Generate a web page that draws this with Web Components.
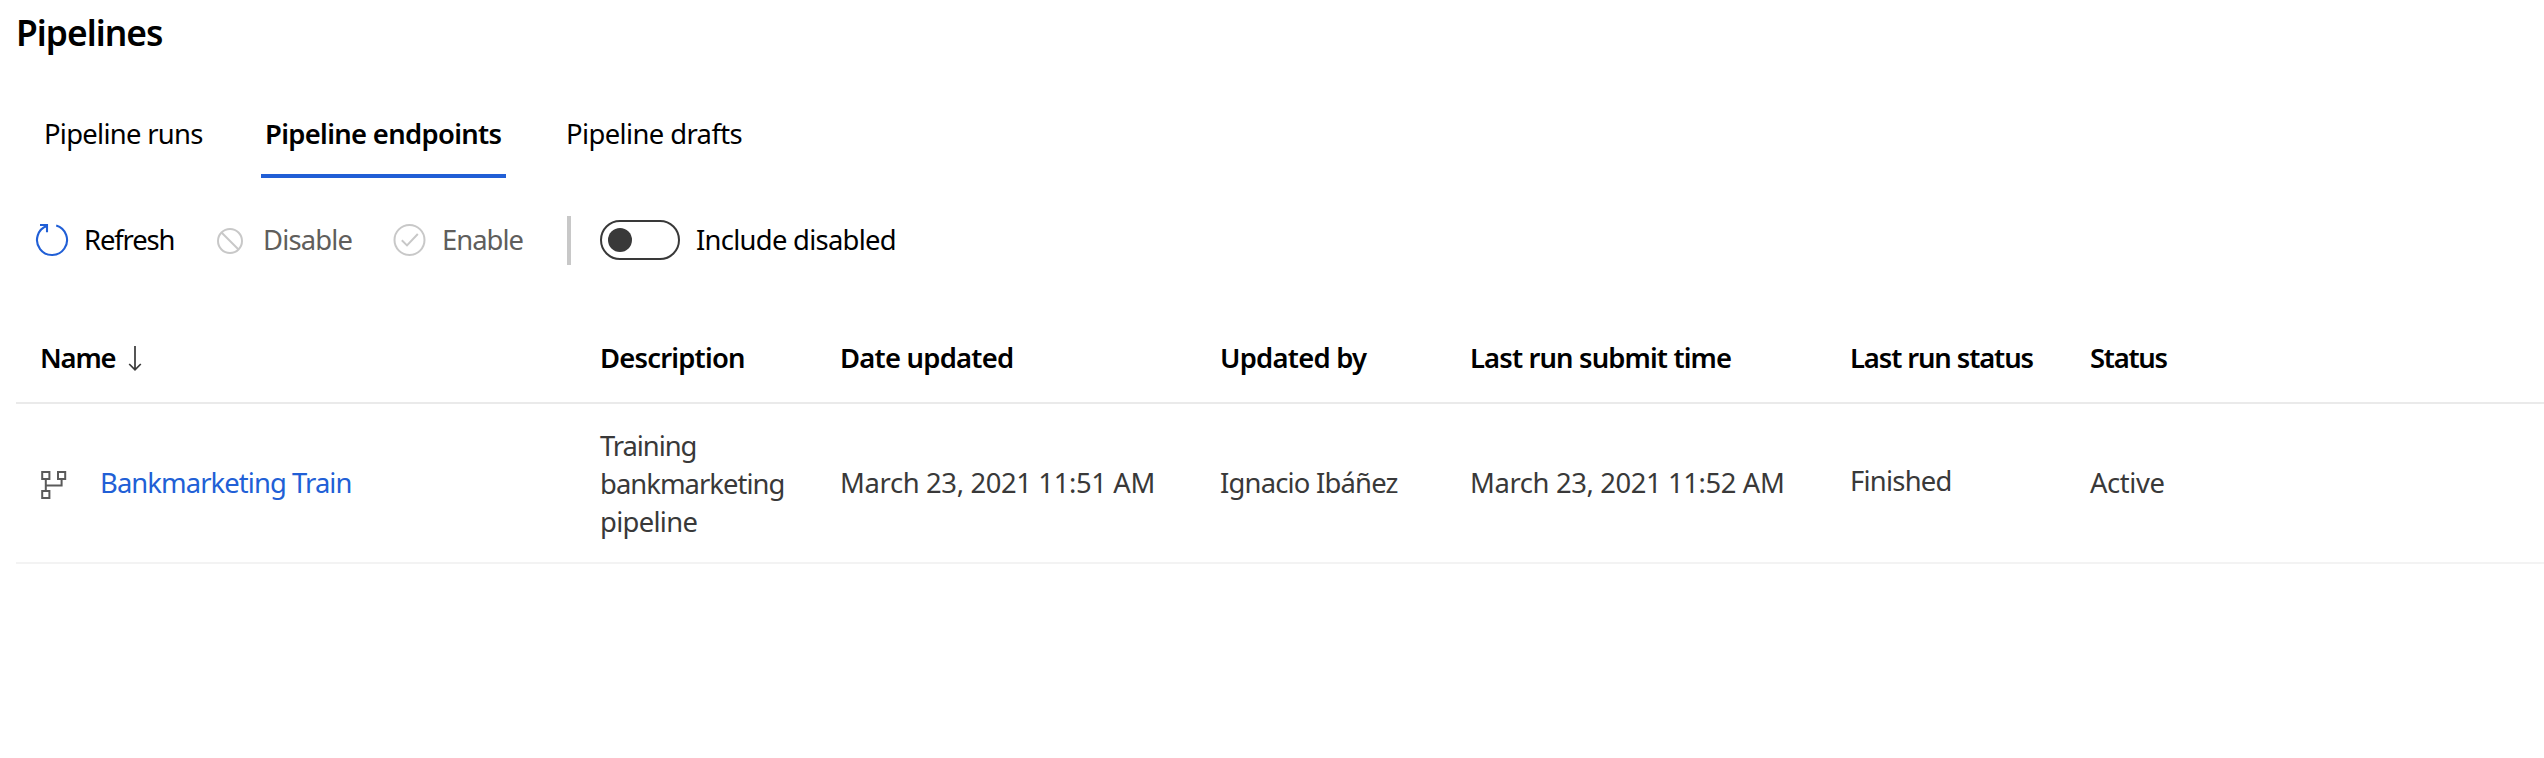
<!DOCTYPE html>
<html lang="en">
<head>
<meta charset="utf-8">
<title>Pipelines</title>
<style>
body{margin:0;background:#fff;color:#000;font:27.4px/38px "Noto Sans","Open Sans",sans-serif}
</style>
</head>
<body>
<pipelines-page></pipelines-page>
<script>
const define=(name,html,setup)=>customElements.define(name,class extends HTMLElement{
  connectedCallback(){
    if(this.shadowRoot)return;
    const t=document.createElement('template');
    t.innerHTML=html;
    this.attachShadow({mode:'open'}).append(t.content.cloneNode(true));
    if(setup)setup(this);
  }
});

// A label whose tracking is adjusted so its glyphs span the width given in "w".
const ctx=document.createElement('canvas').getContext('2d');
define('fit-text',`<style>:host{display:inline-block;white-space:nowrap;margin-left:1px}</style><slot></slot>`,el=>{
  const cs=getComputedStyle(el),s=el.textContent;
  ctx.font=`${cs.fontWeight} ${cs.fontSize} ${cs.fontFamily}`;
  const m=ctx.measureText(s),ink=m.actualBoundingBoxRight+m.actualBoundingBoxLeft;
  el.style.letterSpacing=((el.getAttribute('w')-ink)/(s.length-1)).toFixed(3)+'px';
});

define('page-title',`<style>:host{display:block;padding:8px 0 0 15px;font-size:35.4px;line-height:48px;font-weight:600}</style><slot></slot>`);

define('tab-item',`<style>
:host{display:block;box-sizing:border-box;height:88px;padding:25px 0 0 var(--inset,2px);border-bottom:4px solid transparent}
:host([selected]){border-color:#215fd6;font-weight:600}
</style><slot></slot>`);

define('tab-bar',`<style>:host{display:flex;margin-top:34px;padding-left:41px}
.runs{width:220px}
.endpoints{width:245px;margin-right:56px}
</style>
<tab-item class="runs"><fit-text w="156.3">Pipeline runs</fit-text></tab-item>
<tab-item class="endpoints" selected style="--inset:3px"><fit-text w="234.5">Pipeline endpoints</fit-text></tab-item>
<tab-item style="--inset:3px"><fit-text w="173.5">Pipeline drafts</fit-text></tab-item>`);

define('command-button',`<style>
:host{display:flex;align-items:center}
:host([disabled]){color:#605e5c}
::slotted(svg){display:block;flex:none;fill:none;stroke-width:2}
</style><slot name="icon"></slot><slot></slot>`);

define('toggle-switch',`<style>
:host{display:flex;align-items:center}
.track{box-sizing:border-box;width:80px;height:40px;border:2px solid #393939;border-radius:20px;padding:6px;margin-right:15px}
.knob{width:24px;height:24px;border-radius:50%;background:#393939}
</style><div class="track"><div class="knob"></div></div><slot></slot>`);

define('command-bar',`<style>
:host{display:flex;align-items:center;height:124px;padding-left:34px}
.rule{width:4px;height:49px;background:#c8c8c8;margin-right:29px}
.refresh{width:179px}.disable{width:176px}.enable{width:178px}
.refresh svg{margin-right:13px}.disable svg{margin-right:19px}.enable svg{margin-right:14px}
</style>
<command-button class="refresh"><svg slot="icon" width="36" height="36" stroke="#215fd6"><path d="M22.2 3.6A15 15 0 1 1 13.2 3.8M6 3H13V10.2" stroke-width="2.1"/></svg><fit-text w="87.5">Refresh</fit-text></command-button>
<command-button class="disable" disabled><svg slot="icon" width="30" height="30" stroke="#c8c8c8"><circle cx="17" cy="16" r="12"/><path d="M8.5 7.5L25.5 24.5"/></svg><fit-text w="87.5">Disable</fit-text></command-button>
<command-button class="enable" disabled><svg slot="icon" width="38" height="36" stroke="#c8c8c8"><circle cx="20.5" cy="18" r="15"/><path d="M12.8 18.3L18 23.4L28.8 12"/></svg><fit-text w="79.5">Enable</fit-text></command-button>
<div class="rule"></div>
<toggle-switch><fit-text w="197.8">Include disabled</fit-text></toggle-switch>`);

const columns='display:grid;grid-template-columns:560px 240px 380px 250px 380px 240px 1fr;margin-left:16px;padding-left:23px;box-sizing:border-box';
define('table-head',`<style>
:host{${columns};height:102px;padding-top:37px;border-bottom:2px solid #eaeaea;font-weight:600}
.sorted{display:flex;align-items:center;height:38px}
svg{margin:0 0 0 13px;fill:none;stroke:#393939;stroke-width:1.7}
</style>
<div class="sorted"><fit-text w="73.5">Name</fit-text><svg width="14" height="26"><path d="M7 1V24.5M1.2 19L7 24.8L12.8 19"/></svg></div>
<fit-text w="142">Description</fit-text>
<fit-text w="171">Date updated</fit-text>
<fit-text w="146">Updated by</fit-text>
<fit-text w="259">Last run submit time</fit-text>
<fit-text w="181.5">Last run status</fit-text>
<fit-text w="76.5">Status</fit-text>`);

define('table-row',`<style>
:host{${columns};align-items:center;height:160px;border-bottom:2px solid #f3f3f3;color:#393939}
.name{display:flex;align-items:center;color:#215fd6}
svg{margin:3px 32px 0 2px;fill:none;stroke:#5a5a5a;stroke-width:2}
.desc{display:flex;flex-direction:column;align-items:flex-start;padding-top:2px}
.raised{margin-bottom:4px}
</style>
<div class="name"><svg width="26" height="28"><path d="M1.2 1H8.4V8H1.2ZM17 1H24.2V8H17ZM1.2 20H8.4V27H1.2ZM4.8 8V20M4.8 14.5H20.6V8"/></svg><fit-text w="248.5">Bankmarketing Train</fit-text></div>
<div class="desc"><fit-text w="95.5">Training</fit-text><fit-text w="181.5">bankmarketing</fit-text><fit-text w="95.5">pipeline</fit-text></div>
<fit-text w="311.5">March 23, 2021 11:51 AM</fit-text>
<fit-text w="176.5">Ignacio Ibáñez</fit-text>
<fit-text w="311">March 23, 2021 11:52 AM</fit-text>
<fit-text class="raised" w="98.5">Finished</fit-text>
<fit-text w="74.5">Active</fit-text>`);

define('pipelines-page',`<style>:host{display:block;height:758px;overflow:hidden}</style>
<page-title><fit-text w="143">Pipelines</fit-text></page-title>
<tab-bar></tab-bar>
<command-bar></command-bar>
<table-head></table-head>
<table-row></table-row>`);
</script>
</body>
</html>
